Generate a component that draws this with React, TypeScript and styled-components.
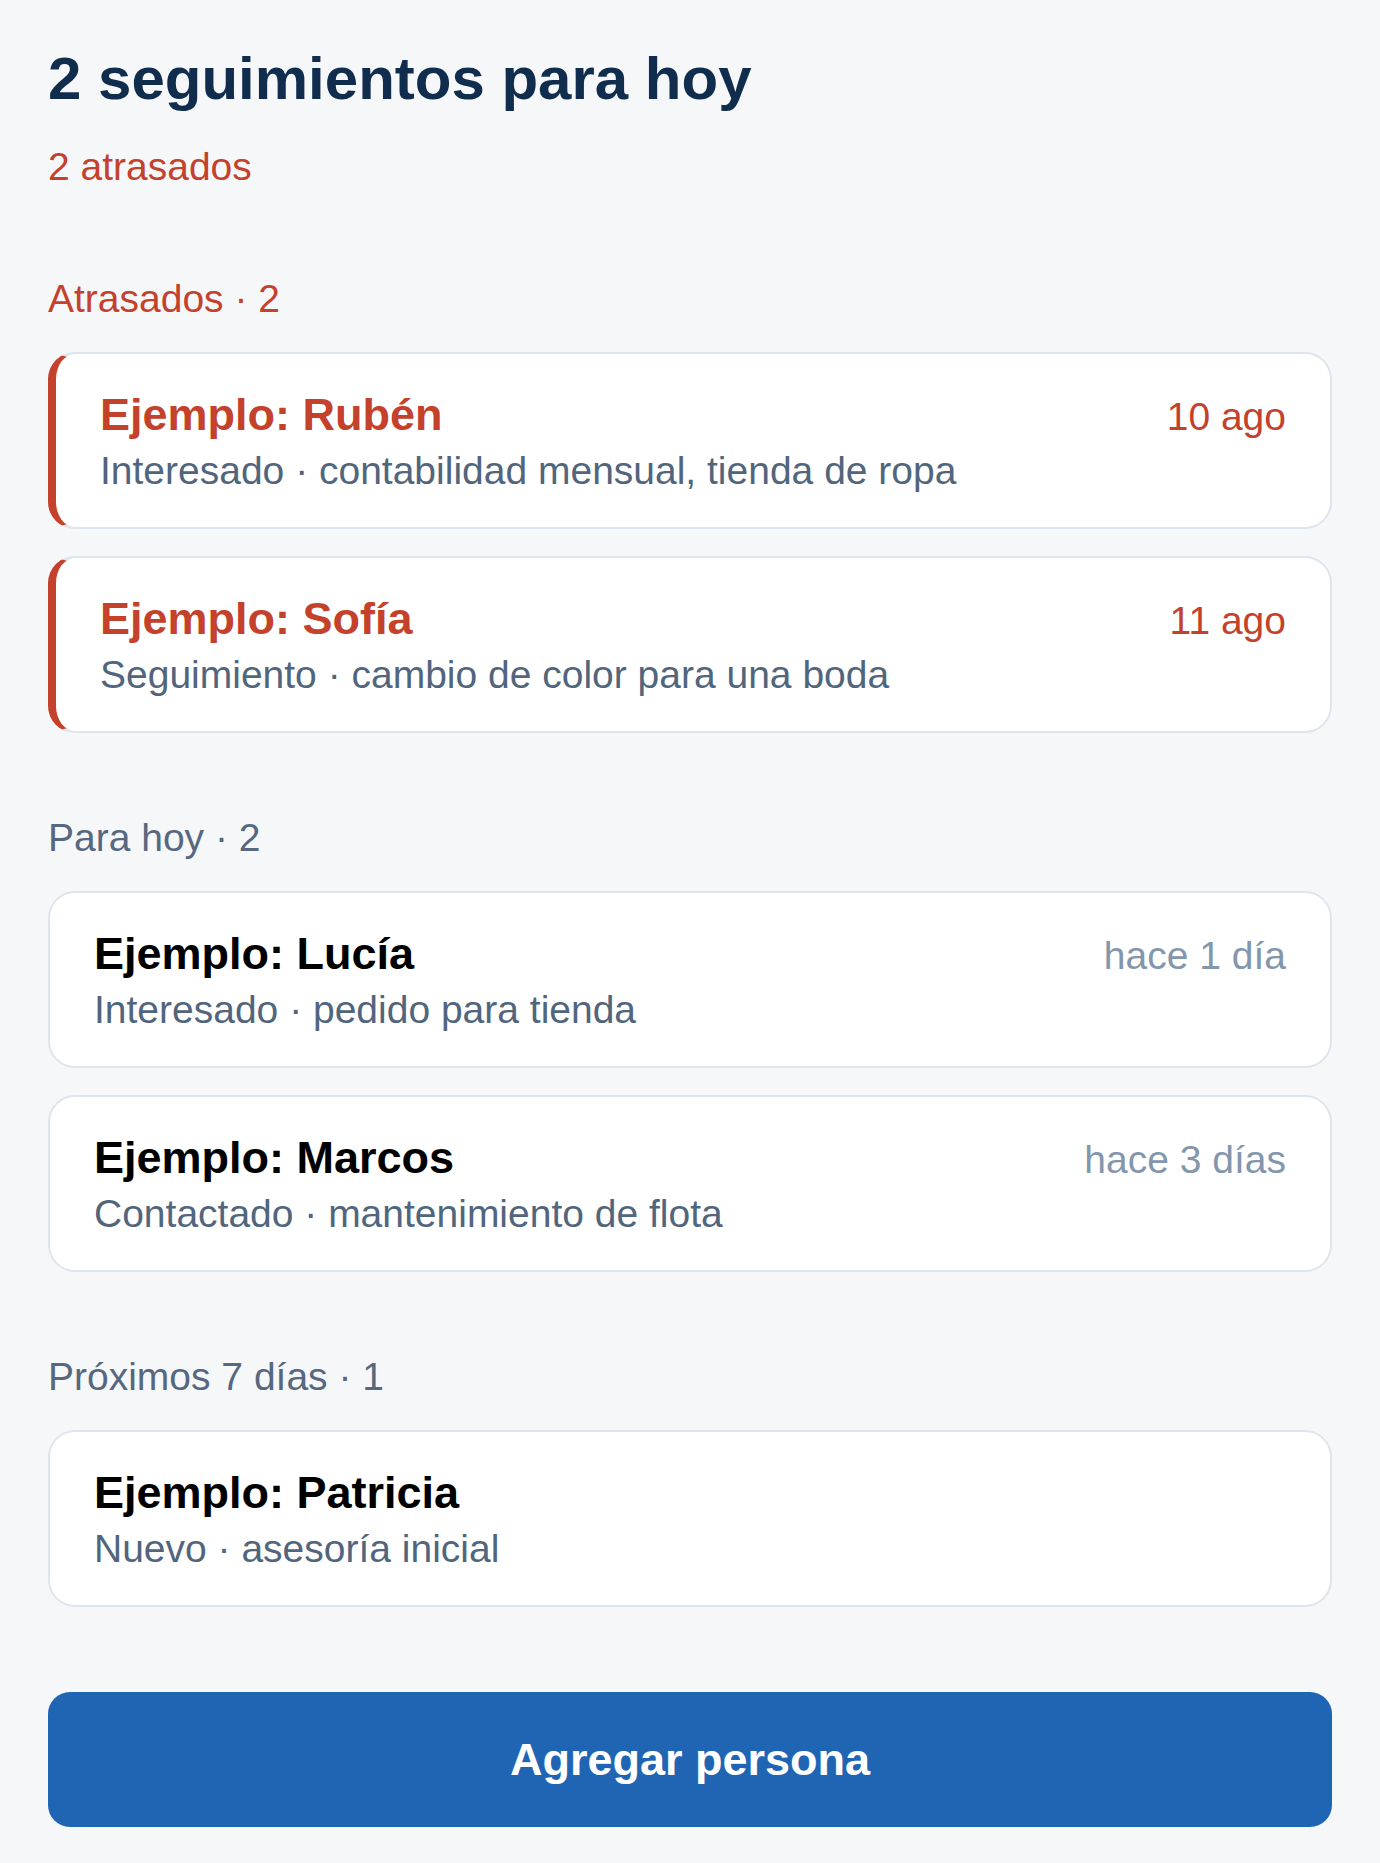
import React from 'react';
import styled, { createGlobalStyle } from 'styled-components';

type Tone = 'late' | 'normal';

interface FollowUp {
  name: string;
  detail: string;
  when?: string;
}

interface Section {
  label: string;
  tone: Tone;
  items: FollowUp[];
}

const sections: Section[] = [
  {
    label: 'Atrasados · 2',
    tone: 'late',
    items: [
      { name: 'Ejemplo: Rubén', detail: 'Interesado · contabilidad mensual, tienda de ropa', when: '10 ago' },
      { name: 'Ejemplo: Sofía', detail: 'Seguimiento · cambio de color para una boda', when: '11 ago' },
    ],
  },
  {
    label: 'Para hoy · 2',
    tone: 'normal',
    items: [
      { name: 'Ejemplo: Lucía', detail: 'Interesado · pedido para tienda', when: 'hace 1 día' },
      { name: 'Ejemplo: Marcos', detail: 'Contactado · mantenimiento de flota', when: 'hace 3 días' },
    ],
  },
  {
    label: 'Próximos 7 días · 1',
    tone: 'normal',
    items: [{ name: 'Ejemplo: Patricia', detail: 'Nuevo · asesoría inicial' }],
  },
];

const GlobalStyle = createGlobalStyle`
  * {
    box-sizing: border-box;
  }

  body {
    margin: 0;
    background: #f6f7f9;
    font-family: "Liberation Sans", Arial, sans-serif;
  }
`;

const Page = styled.main`
  display: flex;
  flex-direction: column;
  padding: 46px 48px 36px;
`;

const Title = styled.h1`
  margin: 0;
  font-size: 60px;
  line-height: 66px;
  font-weight: 700;
  color: #112d4e;
`;

const Summary = styled.p`
  margin: 32px 0 0;
  font-size: 39px;
  line-height: 45px;
  color: #c4412b;
`;

const Group = styled.section`
  display: flex;
  flex-direction: column;
  gap: 27px;
  margin-top: 82px;

  &:first-of-type {
    margin-top: 87px;
  }
`;

const GroupLabel = styled.h2<{ $tone: Tone }>`
  margin: 0 0 4px;
  font-size: 39px;
  line-height: 45px;
  font-weight: 400;
  color: ${(p) => (p.$tone === 'late' ? '#c4412b' : '#56687f')};
`;

const Card = styled.div<{ $tone: Tone }>`
  display: flex;
  flex-direction: column;
  gap: 7px;
  padding: 35px 44px 34px;
  background: #fff;
  border: 2px solid #dfe5ed;
  border-left: ${(p) => (p.$tone === 'late' ? '8px solid #c4412b' : '2px solid #dfe5ed')};
  border-radius: 27px;
`;

const TopRow = styled.div`
  display: flex;
  justify-content: space-between;
  align-items: baseline;
`;

const Name = styled.span<{ $tone: Tone }>`
  font-size: 45px;
  line-height: 52px;
  font-weight: 700;
  color: ${(p) => (p.$tone === 'late' ? '#c4412b' : '#000')};
`;

const When = styled.span<{ $tone: Tone }>`
  font-size: 39px;
  color: ${(p) => (p.$tone === 'late' ? '#c4412b' : '#8396ab')};
`;

const Detail = styled.span`
  font-size: 39px;
  line-height: 45px;
  color: #51657d;
`;

const AddButton = styled.button`
  margin-top: 85px;
  height: 135px;
  border: none;
  border-radius: 22px;
  background: #1f65b3;
  color: #fff;
  font-family: "Liberation Sans", Arial, sans-serif;
  font-size: 45px;
  font-weight: 700;
  cursor: pointer;
`;

export default function App() {
  return (
    <>
      <GlobalStyle />
      <Page>
        <Title>2 seguimientos para hoy</Title>
        <Summary>2 atrasados</Summary>
        {sections.map((s) => (
          <Group key={s.label}>
            <GroupLabel $tone={s.tone}>{s.label}</GroupLabel>
            {s.items.map((item) => (
              <Card key={item.name} $tone={s.tone}>
                <TopRow>
                  <Name $tone={s.tone}>{item.name}</Name>
                  {item.when && <When $tone={s.tone}>{item.when}</When>}
                </TopRow>
                <Detail>{item.detail}</Detail>
              </Card>
            ))}
          </Group>
        ))}
        <AddButton>Agregar persona</AddButton>
      </Page>
    </>
  );
}
